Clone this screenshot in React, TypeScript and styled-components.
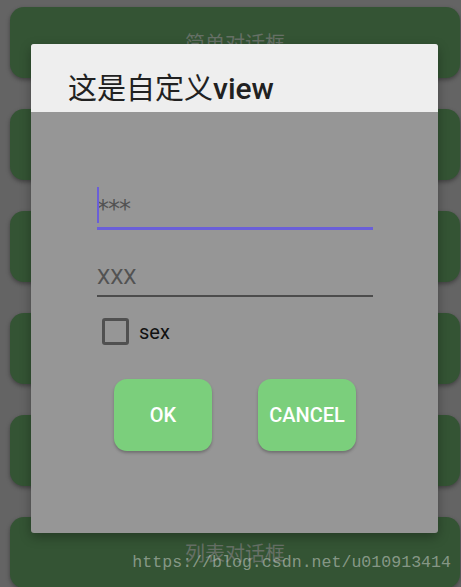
import React, { FC } from 'react';
import styled, { createGlobalStyle } from 'styled-components';

const menu = ['简单对话框', '多按钮对话框', '单选对话框', '多选对话框', '进度条对话框', '列表对话框'];

const GlobalStyle = createGlobalStyle`
  html, body {
    margin: 0;
    padding: 0;
    background: #646464;
    font-family: Roboto, "Noto Sans CJK SC", sans-serif;
  }
`;

const Screen = styled.div`
  position: relative;
  width: 461px;
  height: 587px;
  overflow: hidden;
  background: #646464;
`;

const MenuList = styled.div`
  display: flex;
  flex-direction: column;
  gap: 31px;
  padding: 7px 1px 0 10px;
`;

const MenuButton = styled.div`
  height: 71px;
  border-radius: 14px;
  background: #345434;
  box-shadow: 0 2px 4px rgba(0, 0, 0, 0.35);
  display: flex;
  align-items: center;
  justify-content: center;
  color: #667066;
  font-family: "Noto Sans CJK SC", sans-serif;
  font-size: 20px;
`;

const Dialog = styled.div`
  position: absolute;
  left: 31px;
  top: 44px;
  width: 407px;
  height: 489px;
  border-radius: 3px;
  overflow: hidden;
  background: #969696;
  box-shadow: 0 4px 12px rgba(0, 0, 0, 0.3);
  display: flex;
  flex-direction: column;
`;

const TitleBar = styled.div`
  height: 68px;
  background: #eeeeee;
  display: flex;
  align-items: flex-end;
  padding: 0 0 3px 37px;
  box-sizing: border-box;
`;

const Title = styled.h1`
  margin: 0;
  font-family: "Noto Sans CJK SC", sans-serif;
  font-weight: 400;
  font-size: 29px;
  line-height: 40px;
  color: #212121;
`;

const TitleLatin = styled.span`
  font-family: Roboto, sans-serif;
  font-weight: 500;
  font-size: 30px;
`;

const Body = styled.div`
  display: flex;
  flex-direction: column;
  padding: 71px 65px 0 66px;
`;

const Field = styled.div<{ $focused?: boolean; $gap?: number }>`
  position: relative;
  box-sizing: border-box;
  height: ${({ $focused }) => ($focused ? 47 : 46)}px;
  margin-top: ${({ $gap }) => $gap ?? 0}px;
  border-bottom: ${({ $focused }) => ($focused ? '3px solid #6a5fd8' : '2px solid #4c4c4c')};
  display: flex;
  align-items: flex-end;
  padding-bottom: 6px;
`;

const FieldText = styled.span<{ $secret?: boolean }>`
  font-family: ${({ $secret }) => ($secret ? '"DejaVu Sans", sans-serif' : 'Roboto, sans-serif')};
  font-size: ${({ $secret }) => ($secret ? 24 : 21)}px;
  line-height: 24px;
  letter-spacing: ${({ $secret }) => ($secret ? '-1px' : '0')};
  color: #525252;
`;

const Cursor = styled.span`
  position: absolute;
  left: 0;
  top: 4px;
  width: 2px;
  height: 36px;
  background: #6a5fd8;
`;

const CheckRow = styled.label`
  display: flex;
  align-items: center;
  gap: 10px;
  margin-top: 21px;
  padding-left: 5px;
`;

const Box = styled.span`
  width: 27px;
  height: 27px;
  box-sizing: border-box;
  border: 3px solid #505050;
  border-radius: 3px;
`;

const CheckText = styled.span`
  font-size: 20px;
  color: #111111;
`;

const Actions = styled.div`
  display: flex;
  justify-content: center;
  gap: 46px;
  margin-top: 34px;
`;

const ActionButton = styled.button`
  width: 98px;
  height: 72px;
  border: none;
  border-radius: 13px;
  background: #7bcf7c;
  box-shadow: 0 2px 3px rgba(0, 0, 0, 0.25);
  color: #ffffff;
  font-family: Roboto, sans-serif;
  font-weight: 500;
  font-size: 20px;
  padding: 0;
`;

const Watermark = styled.div`
  position: absolute;
  right: 10px;
  top: 553px;
  font-family: "Liberation Mono", "DejaVu Sans Mono", monospace;
  font-size: 16.6px;
  line-height: 20px;
  color: rgba(205, 210, 205, 0.55);
`;

const App: FC = () => {
    return (
        <Screen>
            <GlobalStyle />
            <MenuList>
                {menu.map((title) => (
                    <MenuButton key={title}>{title}</MenuButton>
                ))}
            </MenuList>
            <Dialog>
                <TitleBar>
                    <Title>这是自定义<TitleLatin>view</TitleLatin></Title>
                </TitleBar>
                <Body>
                    <Field $focused>
                        <Cursor />
                        <FieldText $secret>***</FieldText>
                    </Field>
                    <Field $gap={21}>
                        <FieldText>XXX</FieldText>
                    </Field>
                    <CheckRow>
                        <Box />
                        <CheckText>sex</CheckText>
                    </CheckRow>
                    <Actions>
                        <ActionButton>OK</ActionButton>
                        <ActionButton>CANCEL</ActionButton>
                    </Actions>
                </Body>
            </Dialog>
            <Watermark>https://blog.csdn.net/u010913414</Watermark>
        </Screen>
    );
};

export default App;
